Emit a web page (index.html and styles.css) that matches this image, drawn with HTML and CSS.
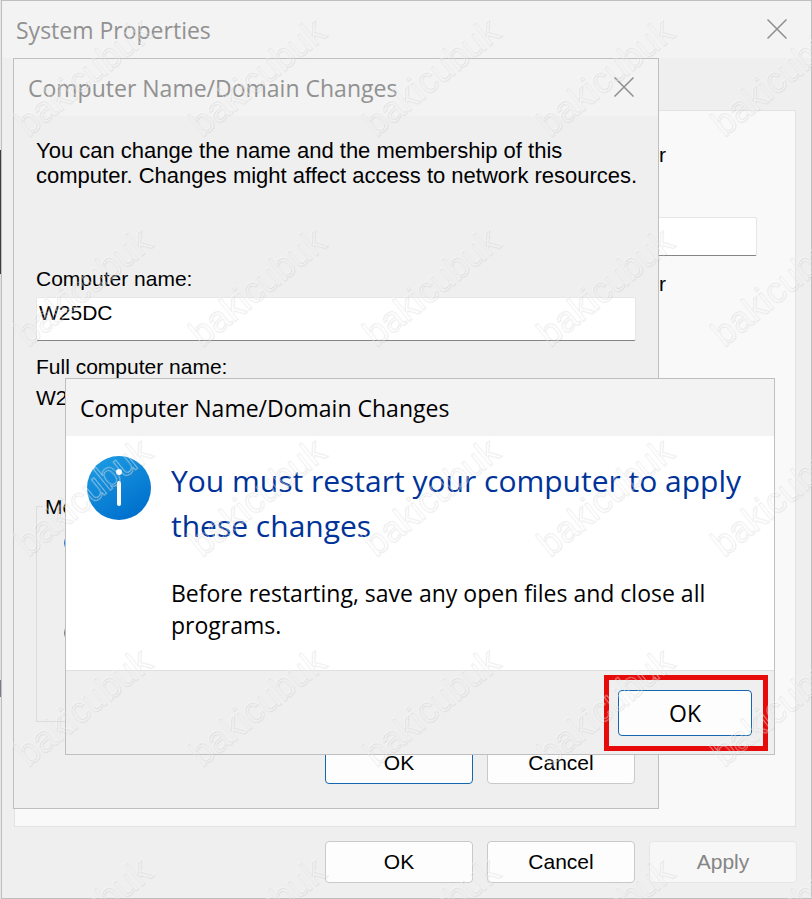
FILE: index.html
```html
<!DOCTYPE html>
<html lang="en">
<head>
<meta charset="utf-8">
<title>System Properties</title>
<link rel="stylesheet" href="styles.css">
</head>
<body>
<main class="desktop">
  <section class="window" aria-label="System Properties">
    <header class="titlebar">
      <h1 class="title">System Properties</h1>
      <button class="close" type="button" aria-label="Close"><svg viewBox="0 0 20 20"><path d="M0.5 0.5L19.5 19.5M19.5 0.5L0.5 19.5"/></svg></button>
    </header>
    <div class="page">
      <p class="page-line">ur</p>
      <input class="field description" type="text" aria-label="Computer description">
      <p class="page-line page-hint">r</p>
    </div>
    <footer class="actions">
      <button class="button" type="button">OK</button>
      <button class="button" type="button">Cancel</button>
      <button class="button" type="button" disabled>Apply</button>
    </footer>
  </section>

  <section class="window dialog rename" aria-label="Computer Name/Domain Changes">
    <header class="titlebar">
      <h2 class="title">Computer Name/Domain Changes</h2>
      <button class="close" type="button" aria-label="Close"><svg viewBox="0 0 20 20"><path d="M0.5 0.5L19.5 19.5M19.5 0.5L0.5 19.5"/></svg></button>
    </header>
    <div class="rename-body">
      <p class="intro">You can change the name and the membership of this<br>computer. Changes might affect access to network resources.</p>
      <label class="name-label" for="name">Computer name:</label>
      <input class="field name" id="name" type="text" value="W25DC">
      <p class="full-label">Full computer name:</p>
      <p class="full-name">W2</p>
      <fieldset class="member">
        <legend>Me</legend>
        <input class="radio" type="radio" name="member" aria-label="Domain" checked>
        <input class="radio" type="radio" name="member" aria-label="Workgroup">
      </fieldset>
    </div>
    <footer class="actions">
      <button class="button default" type="button">OK</button>
      <button class="button" type="button">Cancel</button>
    </footer>
  </section>

  <section class="window dialog message" role="alertdialog" aria-label="Computer Name/Domain Changes">
    <header class="titlebar">
      <h2 class="title">Computer Name/Domain Changes</h2>
    </header>
    <div class="message-body">
      <svg class="info" viewBox="0 0 64 64" aria-hidden="true">
        <defs><linearGradient id="blue" x1="0" y1="0" x2="0.6" y2="1"><stop offset="0" stop-color="#1f9fe3"/><stop offset="1" stop-color="#0071ce"/></linearGradient></defs>
        <circle cx="32" cy="32" r="32" fill="url(#blue)"/>
        <circle cx="32" cy="16" r="3" fill="#fff"/>
        <rect x="30" y="25" width="4" height="25" rx="2" fill="#fff"/>
      </svg>
      <div class="message-text">
        <p class="headline">You must restart your computer to apply these changes</p>
        <p class="detail">Before restarting, save any open files and close all programs.</p>
      </div>
    </div>
    <footer class="message-actions">
      <div class="highlight"><button class="button default" type="button">OK</button></div>
    </footer>
  </section>

  <div class="watermark" aria-hidden="true">
    <span>bakicubuk</span><span>bakicubuk</span><span>bakicubuk</span><span>bakicubuk</span><span>bakicubuk</span>
    <span>bakicubuk</span><span>bakicubuk</span><span>bakicubuk</span><span>bakicubuk</span><span>bakicubuk</span>
    <span>bakicubuk</span><span>bakicubuk</span><span>bakicubuk</span><span>bakicubuk</span><span>bakicubuk</span>
    <span>bakicubuk</span><span>bakicubuk</span><span>bakicubuk</span><span>bakicubuk</span><span>bakicubuk</span>
    <span>bakicubuk</span><span>bakicubuk</span><span>bakicubuk</span><span>bakicubuk</span><span>bakicubuk</span>
  </div>
</main>
</body>
</html>
```
FILE: styles.css
```css
* { box-sizing: border-box; }

body {
  margin: 0;
  color: #000;
  font: 21px/25px "Liberation Sans", Arial, sans-serif;
}

h1, h2, p { margin: 0; font-weight: 400; }

.desktop {
  position: relative;
  display: flex;
  min-height: 100vh;
  overflow: hidden;
  padding-left: 1px;
  background: linear-gradient(#e6e6e6 150px, #3c3c3c 150px, #3c3c3c 274px, #dedede 274px, #dedede 680px, #7d7b88 680px, #7d7b88 697px, #e6e6e6 697px);
}

.window {
  display: flex;
  flex: 1;
  flex-direction: column;
  border: 1px solid #bfbfbf;
  background: #efefef;
}

.titlebar {
  display: flex;
  align-items: center;
  justify-content: space-between;
  height: 57px;
  padding: 0 24px 0 14px;
  background: #f3f3f3;
}

.title {
  color: #919191;
  font: 23px/32px "Open Sans", "Segoe UI", sans-serif;
}

.close {
  display: flex;
  padding: 0 0 2px;
  border: 0;
  background: none;
}

.close svg {
  width: 20px;
  height: 20px;
  fill: none;
  stroke: #8e8e8e;
  stroke-width: 1.5;
}

.page {
  display: flex;
  flex: 1;
  flex-direction: column;
  align-items: flex-end;
  margin: 52px 15px 0 12px;
  padding: 31px 38px;
  border: 1px solid #e2e2e2;
  background: #f9f9f9;
}

.page-line { padding-right: 91px; }
.page-hint { margin-top: 15px; }

.field {
  border: 1px solid #e6e6e6;
  border-bottom-color: #858585;
  border-radius: 2px;
  background: #fff;
  color: inherit;
  font: inherit;
}

.description {
  width: 60%;
  height: 39px;
  margin-top: 50px;
}

.actions {
  display: flex;
  justify-content: flex-end;
  gap: 14px;
  padding: 14px 14px 15px;
}

.button {
  width: 148px;
  height: 42px;
  padding: 0 0 2px;
  border: 1px solid #c9c9c9;
  border-radius: 4px;
  background: #fdfdfd;
  color: #000;
  font: inherit;
}

.button.default { border-color: #1467b0; }

.button:disabled {
  border-color: #e6e6e6;
  background: #f7f7f7;
  color: #858585;
}

.dialog { position: absolute; }

.rename {
  top: 58px;
  right: 153px;
  bottom: 90px;
  left: 13px;
}

.rename-body {
  display: flex;
  flex: 1;
  flex-direction: column;
  padding: 22px 22px 0;
}

.intro {
  font-size: 22px;
  white-space: nowrap;
}

.name-label { margin-top: 78px; }

.name {
  height: 44px;
  margin-top: 6px;
  padding: 0 2px 12px;
}

.full-label { margin-top: 13px; }
.full-name { margin-top: 6px; }

.member {
  display: flex;
  flex: 1;
  flex-direction: column;
  align-items: flex-start;
  gap: 70px;
  margin: 84px 0 0;
  padding: 14px 27px;
  border: 1px solid #dcdcdc;
}

.member legend {
  margin-left: -21px;
  padding: 0 2px;
}

.radio {
  width: 20px;
  height: 20px;
  margin: 0;
}

.rename .actions { padding: 20px 23px 24px; }

.message {
  top: 378px;
  right: 37px;
  left: 65px;
}

.message .title { color: #000; }

.message-body {
  display: flex;
  gap: 20px;
  padding: 20px 20px 29px 21px;
  border-bottom: 1px solid #dfdfdf;
  background: #fff;
}

.info {
  flex: none;
  width: 64px;
  height: 64px;
}

.message-text { font-family: "Open Sans", "Segoe UI", sans-serif; }

.headline {
  padding-top: 2px;
  color: #003399;
  font-size: 30px;
  line-height: 45px;
}

.detail {
  margin-top: 29px;
  font-size: 23px;
  line-height: 32px;
}

.message-actions {
  display: flex;
  justify-content: flex-end;
  padding: 4px 6px 3px;
}

.highlight {
  padding: 10px 11px 10px 9px;
  border: 5px solid #e60a0a;
}

.highlight .button {
  display: block;
  width: 134px;
  height: 46px;
  padding: 0;
  font: 23px/32px "Open Sans", "Segoe UI", sans-serif;
}

.watermark {
  position: absolute;
  top: 0;
  left: 0;
  display: grid;
  grid-template-columns: repeat(5, 174px);
  grid-auto-rows: 210px;
  padding-left: 34px;
  pointer-events: none;
}

.watermark span {
  align-self: start;
  justify-self: start;
  padding-top: 101px;
  color: transparent;
  font-size: 36px;
  line-height: 44px;
  transform: rotate(-39deg);
  transform-origin: 0 100%;
  -webkit-text-stroke: 1px rgba(255, 255, 255, 0.5);
  filter: drop-shadow(0 1px 0 rgba(0, 0, 0, 0.2));
}
```
